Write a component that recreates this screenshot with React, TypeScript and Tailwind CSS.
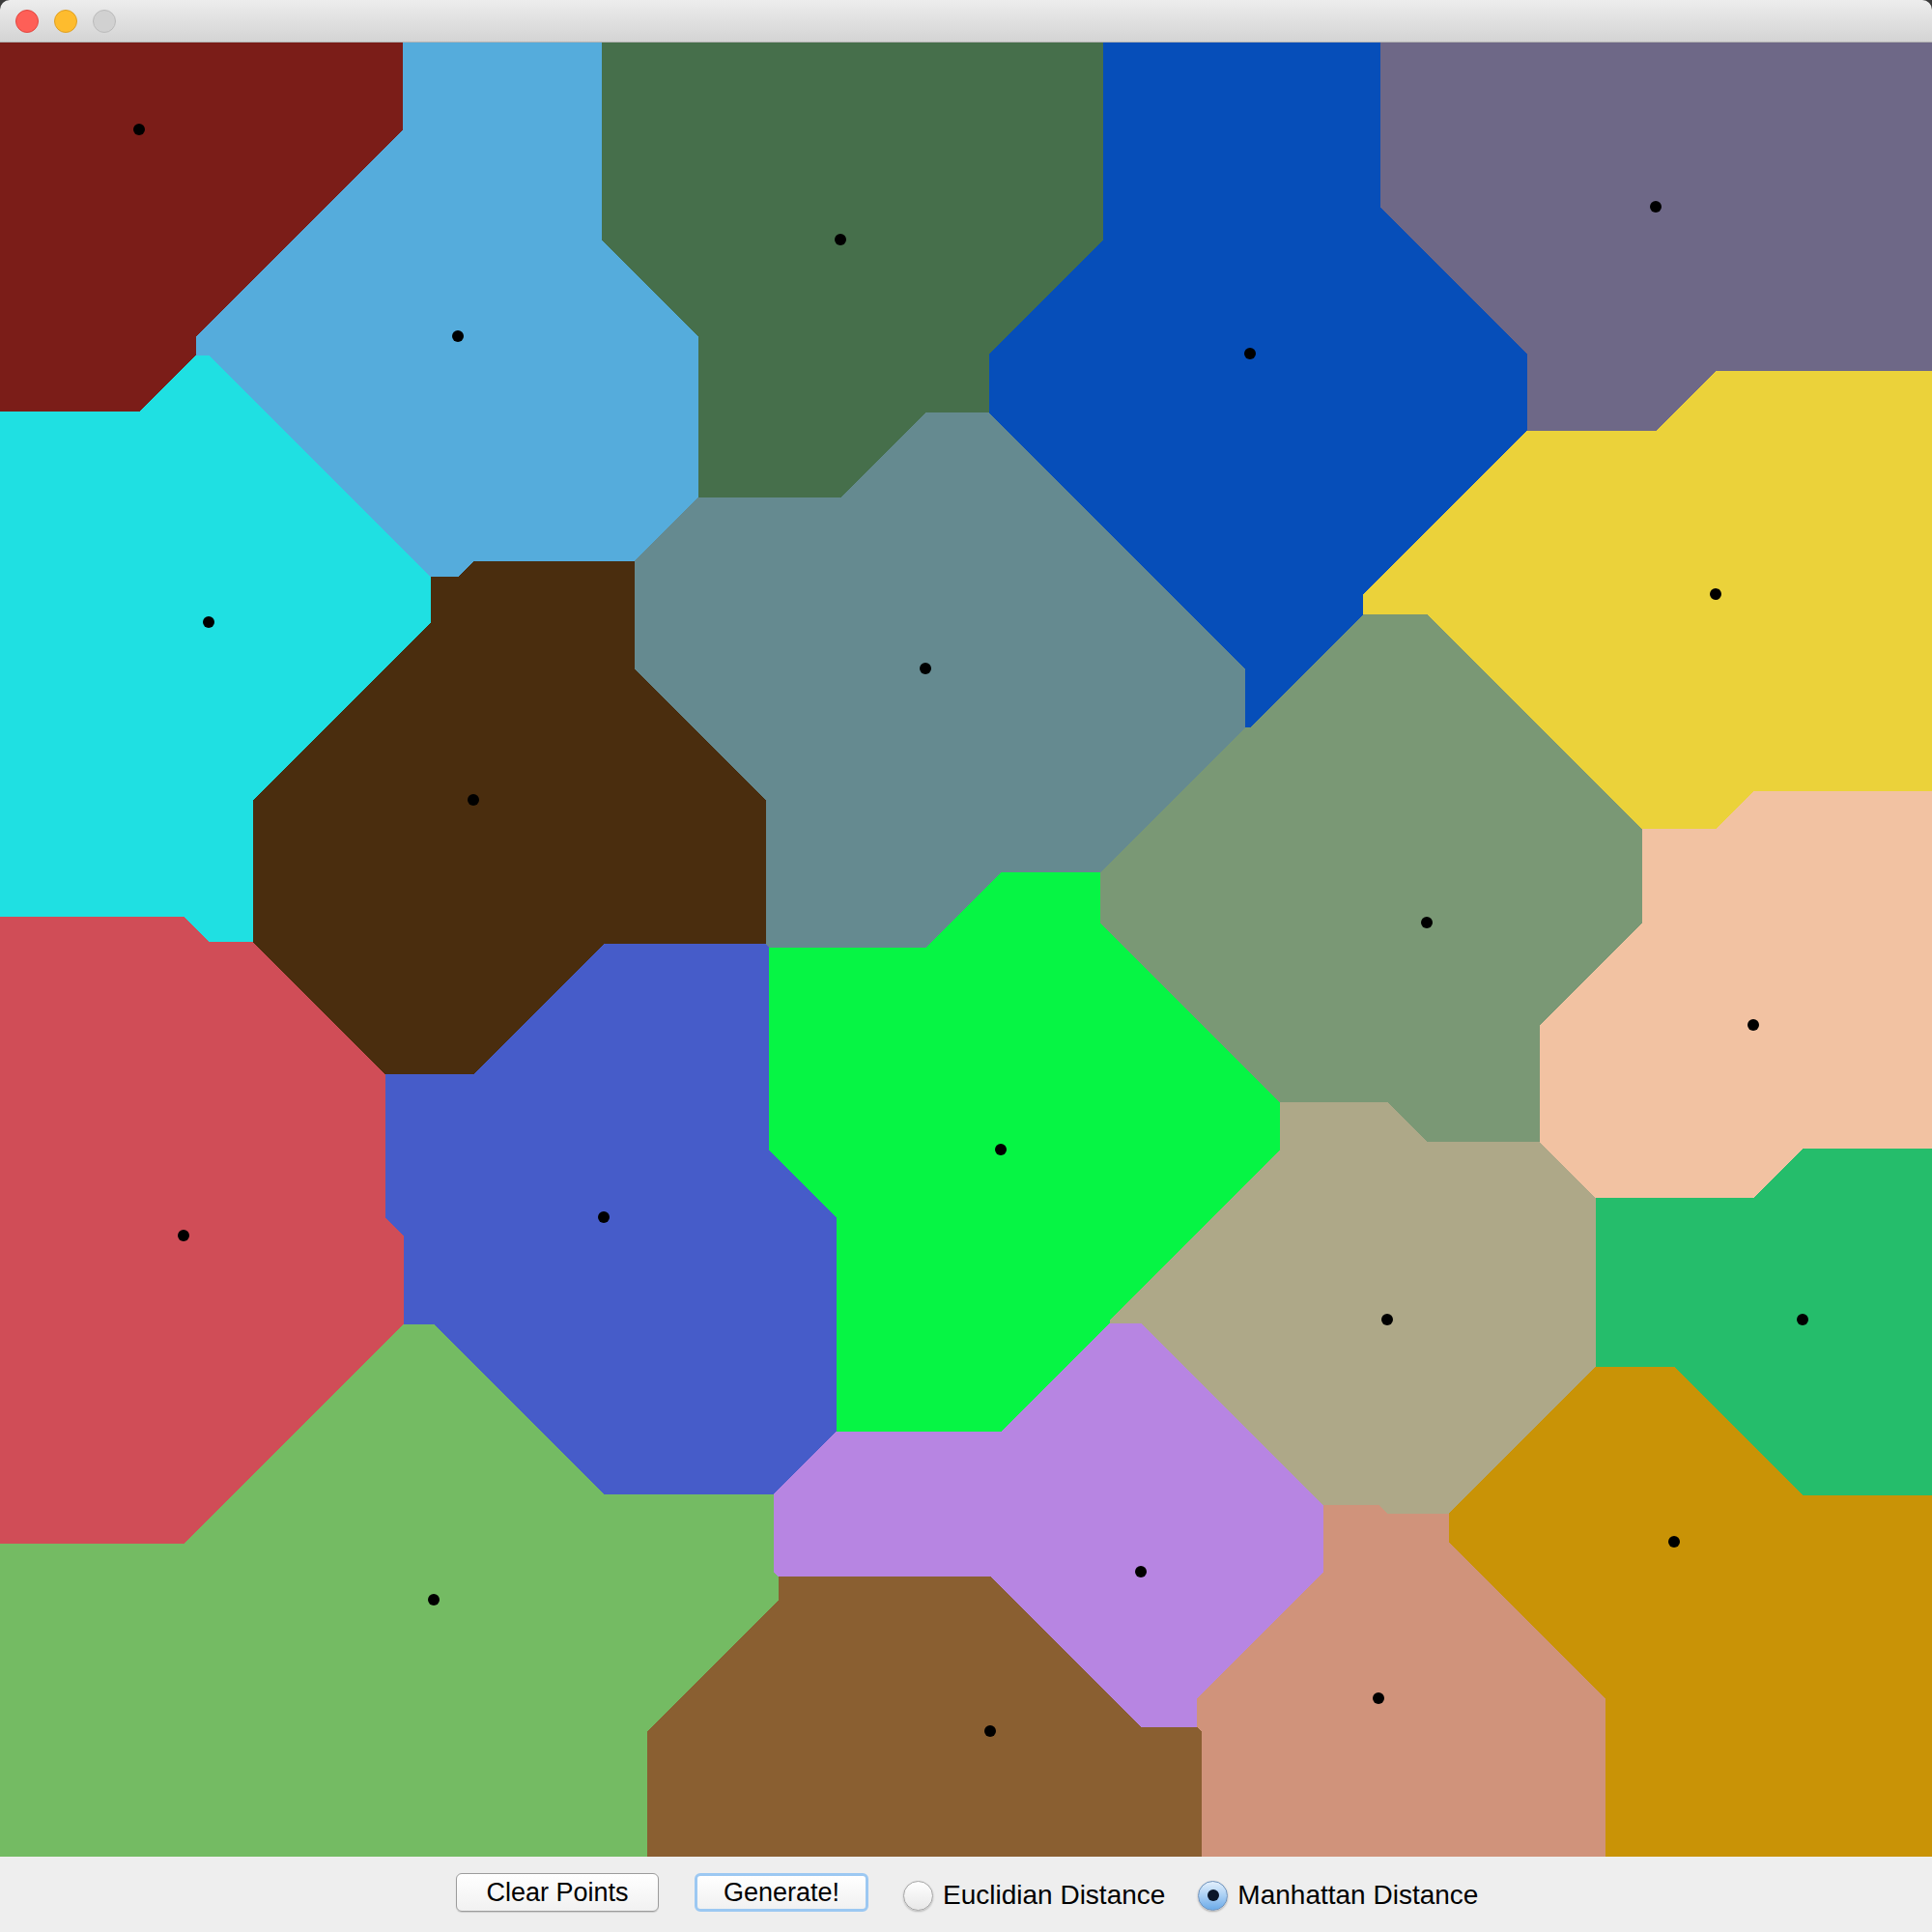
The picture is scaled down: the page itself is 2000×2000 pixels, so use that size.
import { useMemo } from "react";

const W = 2000;
const H = 1878;

const sites: [number, number, string][] = [
  [144, 90, "#7B1D18"],
  [474, 304, "#55ACDC"],
  [870, 204, "#466F4B"],
  [1294, 322, "#064EB9"],
  [1714, 170, "#6E6887"],
  [216, 600, "#1FE0E2"],
  [490, 784, "#4A2D0E"],
  [958, 648, "#658A90"],
  [1776, 571, "#EBD23A"],
  [1477, 911, "#7A9875"],
  [1815, 1017, "#F2C2A2"],
  [190, 1235, "#D04D57"],
  [625, 1216, "#465CC9"],
  [1036, 1146, "#06F544"],
  [1436, 1322, "#AEA888"],
  [1866, 1322, "#25BD6B"],
  [449, 1612, "#74BB63"],
  [1181, 1583, "#B785E2"],
  [1025, 1748, "#8A5F31"],
  [1427, 1714, "#D0937B"],
  [1733, 1552, "#C99306"],
];

type Run = { s: number; x0: number; x1: number; y0: number };

function buildPaths(): string[] {
  const out: string[][] = sites.map(() => []);
  let prev = new Map<string, Run>();
  const emit = (r: Run, y: number) => {
    const w = r.x1 - r.x0;
    out[r.s].push(`M${r.x0} ${r.y0}h${w}v${y - r.y0}h${-w}z`);
  };
  for (let y = 0; y < H; y++) {
    const next = new Map<string, Run>();
    let cur = -1;
    let start = 0;
    const push = (s: number, x0: number, x1: number) => {
      const key = `${s}:${x0}:${x1}`;
      const old = prev.get(key);
      if (old) {
        next.set(key, old);
        prev.delete(key);
      } else next.set(key, { s, x0, x1, y0: y });
    };
    for (let x = 0; x < W; x++) {
      let best = 0;
      let bd = Infinity;
      for (let i = 0; i < sites.length; i++) {
        const d = Math.abs(x - sites[i][0]) + Math.abs(y - sites[i][1]);
        if (d < bd) {
          bd = d;
          best = i;
        }
      }
      if (best !== cur) {
        if (cur >= 0) push(cur, start, x);
        cur = best;
        start = x;
      }
    }
    push(cur, start, W);
    prev.forEach((r) => emit(r, y));
    prev = next;
  }
  prev.forEach((r) => emit(r, H));
  return out.map((p) => p.join(""));
}

function Radio({ checked, label }: { checked?: boolean; label: string }) {
  return (
    <div className="flex items-center gap-[10px]">
      <div
        className={
          checked
            ? "w-[31px] h-[31px] rounded-full border border-[#6F93BD] bg-gradient-to-b from-[#E3F0FC] via-[#A9CFF4] to-[#6AAAE8] flex items-center justify-center shadow-[0_1px_2px_rgba(0,0,0,0.3)]"
            : "w-[31px] h-[31px] rounded-full border border-[#A6A6A6] bg-gradient-to-b from-white to-[#E8E8E8] shadow-[0_1px_2px_rgba(0,0,0,0.25)]"
        }
      >
        {checked && <div className="w-[12px] h-[12px] rounded-full bg-[#0A1628]" />}
      </div>
      <span className="text-[28px] text-black leading-none">{label}</span>
    </div>
  );
}

export default function App() {
  const paths = useMemo(buildPaths, []);
  return (
    <div
      className="w-[2000px] h-[2000px] bg-[#3A3A3A] flex flex-col"
      style={{ fontFamily: '"Liberation Sans", Arial, sans-serif' }}
    >
      <div className="h-[44px] rounded-t-[10px] bg-gradient-to-b from-[#EDEDED] to-[#D4D4D4] border-b border-[#B5B5B5] flex items-center pl-[16px] gap-[16px]">
        <div className="w-[24px] h-[24px] rounded-full bg-[#FE5F57] border border-[#E2463F]" />
        <div className="w-[24px] h-[24px] rounded-full bg-[#FEBC2E] border border-[#DFA023]" />
        <div className="w-[24px] h-[24px] rounded-full bg-[#D1D1D1] border border-[#BBBBBB]" />
      </div>
      <svg width={W} height={H} shapeRendering="crispEdges" className="block">
        {paths.map((d, i) => (
          <path key={i} d={d} fill={sites[i][2]} />
        ))}
        {sites.map(([x, y], i) => (
          <circle key={i} cx={x} cy={y} r={6} fill="#000" shapeRendering="auto" />
        ))}
      </svg>
      <div className="h-[78px] bg-[#EEEEEE] flex items-center pl-[472px] pb-[4px]">
        <button className="w-[210px] h-[40px] rounded-[6px] border border-[#9C9C9C] bg-gradient-to-b from-white to-[#F1F1F1] text-[27px] text-black leading-none shadow-[0_1px_1px_rgba(0,0,0,0.15)]">
          Clear Points
        </button>
        <button className="ml-[37px] w-[180px] h-[40px] rounded-[6px] border-[3px] border-[#9CC8F2] bg-gradient-to-b from-white to-[#F1F1F1] text-[27px] text-black leading-none">
          Generate!
        </button>
        <div className="ml-[36px] mt-[6px]">
          <Radio label="Euclidian Distance" />
        </div>
        <div className="ml-[34px] mt-[6px]">
          <Radio checked label="Manhattan Distance" />
        </div>
      </div>
    </div>
  );
}
